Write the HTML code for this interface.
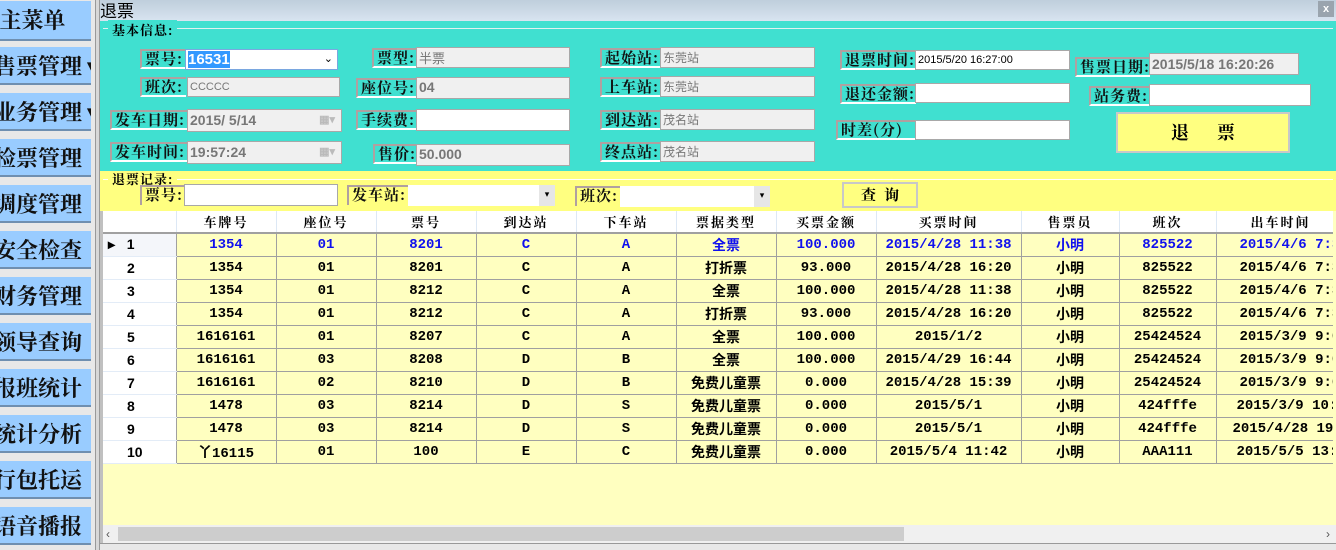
<!DOCTYPE html>
<html><head><meta charset="utf-8"><style>
*{box-sizing:border-box;margin:0;padding:0}
body{width:1336px;height:550px;overflow:hidden;background:#f0f0f0;position:relative;font-family:"Liberation Sans","Noto Serif CJK SC",serif}
.a{position:absolute}
.nav{position:absolute;left:0;width:91px;height:38px;background:#99ccff;border-bottom:2px solid #6f8fb0;font:bold 22px "Noto Serif CJK SC",serif;color:#111;white-space:nowrap;overflow:hidden;line-height:38px;text-indent:-6px}
.lbl{position:absolute;font:bold 15px "Noto Serif CJK SC",serif;color:#111;border-top:2px solid #b0a0a0;border-left:2px solid #b0a0a0;border-bottom:2px solid #fff;line-height:16px;padding-left:3px;white-space:nowrap;height:20px;letter-spacing:1px}
.inp{position:absolute;background:#fff;border:1px solid #a8a8a8;font:13px "Liberation Sans",sans-serif;padding-left:2px;line-height:19px;color:#000;white-space:nowrap}
.dis{background:#f0f0f0;color:#777}
table{border-collapse:collapse;table-layout:fixed;font:bold 14px "Liberation Mono","Noto Sans CJK SC",monospace}
td{height:23px;border:1px solid #a0a0a0;text-align:center;background:#ffffc0;white-space:nowrap;overflow:hidden;padding:0}
th{height:22px;background:#fff;border-right:1px solid #dde8f5;border-bottom:2px solid #a0a0a0;font:bold 13px "Noto Serif CJK SC",serif;white-space:nowrap;letter-spacing:2px}
td.rh{background:#fff;border:none;border-bottom:1px solid #e3ecf7;text-align:left;padding-left:24px;font-family:"Liberation Sans",sans-serif}
tr.b td{color:#1010ee}
tr.b td.rh{color:#000}
td.l{text-align:left;padding-left:23px}
</style></head><body>
<div class="a" style="left:0;top:0;width:96px;height:550px;background:#e8e8e8"></div>
<div class="nav" style="top:1px;height:40px">&nbsp;主菜单</div>
<div class="nav" style="top:47px">售票管理 ▾</div>
<div class="nav" style="top:93px">业务管理 ▾</div>
<div class="nav" style="top:139px">检票管理</div>
<div class="nav" style="top:185px">调度管理</div>
<div class="nav" style="top:231px">安全检查</div>
<div class="nav" style="top:277px">财务管理</div>
<div class="nav" style="top:323px">领导查询</div>
<div class="nav" style="top:369px">报班统计</div>
<div class="nav" style="top:415px">统计分析</div>
<div class="nav" style="top:461px">行包托运</div>
<div class="nav" style="top:507px">语音播报</div>
<div class="a" style="left:95px;top:0;width:5px;height:550px;background:#d8d8d8;border-left:1px solid #999;border-right:1px solid #999"></div>
<div class="a" style="left:100px;top:0;width:1236px;height:21px;background:linear-gradient(#bfcedc,#d8e4f0);font:17px 'Noto Sans CJK SC',sans-serif;line-height:20px">退票</div>
<div class="a" style="left:1318px;top:1px;width:16px;height:16px;background:#9aa4ae;color:#fff;font:bold 11px sans-serif;text-align:center;line-height:16px">x</div>
<div class="a" style="left:100px;top:21px;width:1236px;height:150px;background:#40e0d0"></div>
<div class="a" style="left:103px;top:28px;width:1230px;height:1px;background:#e0f0f0"></div>
<div class="a" style="left:108px;top:20px;background:#40e0d0;font:bold 13px 'Noto Serif CJK SC',serif;padding:0 4px;letter-spacing:1px">基本信息:</div>

<div class="lbl" style="left:140px;top:49px;width:46px">票号:</div>
<div class="inp" style="left:185px;top:49px;width:153px;height:21px;border:1px solid #7aa7e0"><span style="background:#3399ff;color:#fff;font-weight:bold;font-size:15px">16531</span><span class="a" style="right:4px;top:0;font-size:11px">⌄</span></div>
<div class="lbl" style="left:140px;top:77px;width:46px">班次:</div>
<div class="inp dis" style="left:187px;top:77px;width:153px;height:20px;font-size:11px">CCCCC</div>
<div class="lbl" style="left:110px;top:110px;width:77px">发车日期:</div>
<div class="inp dis" style="left:187px;top:109px;width:155px;height:23px;font-size:14px;font-weight:bold;line-height:21px">2015/ 5/14<span class="a" style="right:6px;top:0;color:#bbb;font-size:11px">▦▾</span></div>
<div class="lbl" style="left:110px;top:142px;width:77px">发车时间:</div>
<div class="inp dis" style="left:187px;top:141px;width:155px;height:23px;font-size:14px;font-weight:bold;line-height:21px">19:57:24<span class="a" style="right:6px;top:0;color:#bbb;font-size:11px">▦▾</span></div>

<div class="lbl" style="left:372px;top:48px;width:45px">票型:</div>
<div class="inp dis" style="left:416px;top:47px;width:154px;height:21px;font-family:'Noto Sans CJK SC',sans-serif">半票</div>
<div class="lbl" style="left:356px;top:78px;width:61px">座位号:</div>
<div class="inp dis" style="left:416px;top:77px;width:154px;height:22px;font-weight:bold;font-size:14px">04</div>
<div class="lbl" style="left:356px;top:110px;width:61px">手续费:</div>
<div class="inp" style="left:416px;top:109px;width:154px;height:22px"></div>
<div class="lbl" style="left:373px;top:144px;width:44px">售价:</div>
<div class="inp dis" style="left:416px;top:144px;width:154px;height:22px;font-weight:bold;font-size:14px">50.000</div>

<div class="lbl" style="left:600px;top:48px;width:61px">起始站:</div>
<div class="inp dis" style="left:660px;top:47px;width:155px;height:21px;font-family:'Noto Sans CJK SC',sans-serif;font-size:12px">东莞站</div>
<div class="lbl" style="left:600px;top:77px;width:61px">上车站:</div>
<div class="inp dis" style="left:660px;top:76px;width:155px;height:21px;font-family:'Noto Sans CJK SC',sans-serif;font-size:12px">东莞站</div>
<div class="lbl" style="left:600px;top:110px;width:61px">到达站:</div>
<div class="inp dis" style="left:660px;top:109px;width:155px;height:21px;font-family:'Noto Sans CJK SC',sans-serif;font-size:12px">茂名站</div>
<div class="lbl" style="left:600px;top:142px;width:61px">终点站:</div>
<div class="inp dis" style="left:660px;top:141px;width:155px;height:21px;font-family:'Noto Sans CJK SC',sans-serif;font-size:12px">茂名站</div>

<div class="lbl" style="left:840px;top:50px;width:76px">退票时间:</div>
<div class="inp" style="left:915px;top:50px;width:155px;height:20px;font-size:11px">2015/5/20 16:27:00</div>
<div class="lbl" style="left:840px;top:84px;width:76px">退还金额:</div>
<div class="inp" style="left:915px;top:83px;width:155px;height:20px"></div>
<div class="lbl" style="left:836px;top:120px;width:80px">时差(分)</div>
<div class="inp" style="left:915px;top:120px;width:155px;height:20px"></div>

<div class="lbl" style="left:1075px;top:57px;width:75px">售票日期:</div>
<div class="inp dis" style="left:1149px;top:53px;width:150px;height:22px;font-weight:bold;font-size:14px;line-height:20px">2015/5/18 16:20:26</div>
<div class="lbl" style="left:1089px;top:86px;width:61px">站务费:</div>
<div class="inp" style="left:1149px;top:84px;width:162px;height:22px"></div>
<div class="a" style="left:1116px;top:112px;width:174px;height:41px;background:#ffff80;border:2px solid #c8c8c8;font:bold 18px 'Noto Serif CJK SC',serif;text-align:center;line-height:37px;letter-spacing:28px;text-indent:28px">退票</div>

<div class="a" style="left:100px;top:171px;width:1236px;height:40px;background:#ffff80"></div>
<div class="a" style="left:103px;top:179px;width:1230px;height:1px;background:#fff"></div>
<div class="a" style="left:108px;top:171px;background:#ffff80;font:bold 13px 'Noto Serif CJK SC',serif;padding:0 4px;line-height:15px;letter-spacing:1px">退票记录:</div>
<div class="lbl" style="left:140px;top:185px;width:45px;border-bottom:none">票号:</div>
<div class="inp" style="left:184px;top:184px;width:154px;height:22px"></div>
<div class="lbl" style="left:347px;top:185px;width:62px;border-bottom:none">发车站:</div>
<div class="inp" style="left:408px;top:185px;width:147px;height:21px;border:none"><span class="a" style="right:0;top:0;width:16px;height:21px;background:#e6e6e6;font-size:9px;text-align:center">▾</span></div>
<div class="lbl" style="left:575px;top:186px;width:46px;border-bottom:none">班次:</div>
<div class="inp" style="left:620px;top:186px;width:150px;height:21px;border:none"><span class="a" style="right:0;top:0;width:16px;height:21px;background:#e6e6e6;font-size:9px;text-align:center">▾</span></div>
<div class="a" style="left:842px;top:182px;width:76px;height:26px;background:#ffff80;border:2px solid #c8c8c8;font:bold 15px 'Noto Serif CJK SC',serif;text-align:center;line-height:22px;letter-spacing:8px;text-indent:8px">查询</div>

<div class="a" style="left:100px;top:211px;width:1236px;height:339px;background:#ffffc0;border-left:3px solid #c0c0c0"></div>
<div class="a" style="left:103px;top:211px;width:1230px;height:314px;overflow:hidden">
<table style="width:1240px">
<colgroup><col style="width:73px"><col style="width:100px"><col style="width:100px"><col style="width:100px"><col style="width:100px"><col style="width:100px"><col style="width:100px"><col style="width:100px"><col style="width:145px"><col style="width:98px"><col style="width:97px"><col style="width:127px"></colgroup>
<tr><th></th><th>车牌号</th><th>座位号</th><th>票号</th><th>到达站</th><th>下车站</th><th>票据类型</th><th>买票金额</th><th>买票时间</th><th>售票员</th><th>班次</th><th style="text-align:left;padding-left:34px">出车时间</th></tr>
<tr class="b"><td class="rh" style="padding-left:5px;background:#f4f6fa">▸ &nbsp;&nbsp;1</td><td>1354</td><td>01</td><td>8201</td><td>C</td><td>A</td><td>全票</td><td>100.000</td><td>2015/4/28 11:38</td><td>小明</td><td>825522</td><td class="l">2015/4/6 7:30</td></tr>
<tr><td class="rh">2</td><td>1354</td><td>01</td><td>8201</td><td>C</td><td>A</td><td>打折票</td><td>93.000</td><td>2015/4/28 16:20</td><td>小明</td><td>825522</td><td class="l">2015/4/6 7:30</td></tr>
<tr><td class="rh">3</td><td>1354</td><td>01</td><td>8212</td><td>C</td><td>A</td><td>全票</td><td>100.000</td><td>2015/4/28 11:38</td><td>小明</td><td>825522</td><td class="l">2015/4/6 7:30</td></tr>
<tr><td class="rh">4</td><td>1354</td><td>01</td><td>8212</td><td>C</td><td>A</td><td>打折票</td><td>93.000</td><td>2015/4/28 16:20</td><td>小明</td><td>825522</td><td class="l">2015/4/6 7:30</td></tr>
<tr><td class="rh">5</td><td>1616161</td><td>01</td><td>8207</td><td>C</td><td>A</td><td>全票</td><td>100.000</td><td>2015/1/2</td><td>小明</td><td>25424524</td><td class="l">2015/3/9 9:00</td></tr>
<tr><td class="rh">6</td><td>1616161</td><td>03</td><td>8208</td><td>D</td><td>B</td><td>全票</td><td>100.000</td><td>2015/4/29 16:44</td><td>小明</td><td>25424524</td><td class="l">2015/3/9 9:00</td></tr>
<tr><td class="rh">7</td><td>1616161</td><td>02</td><td>8210</td><td>D</td><td>B</td><td>免费儿童票</td><td>0.000</td><td>2015/4/28 15:39</td><td>小明</td><td>25424524</td><td class="l">2015/3/9 9:00</td></tr>
<tr><td class="rh">8</td><td>1478</td><td>03</td><td>8214</td><td>D</td><td>S</td><td>免费儿童票</td><td>0.000</td><td>2015/5/1</td><td>小明</td><td>424fffe</td><td class="l" style="padding-left:20px">2015/3/9 10:00</td></tr>
<tr><td class="rh">9</td><td>1478</td><td>03</td><td>8214</td><td>D</td><td>S</td><td>免费儿童票</td><td>0.000</td><td>2015/5/1</td><td>小明</td><td>424fffe</td><td class="l" style="padding-left:16px">2015/4/28 19:00</td></tr>
<tr><td class="rh">10</td><td>丫16115</td><td>01</td><td>100</td><td>E</td><td>C</td><td>免费儿童票</td><td>0.000</td><td>2015/5/4 11:42</td><td>小明</td><td>AAA111</td><td class="l" style="padding-left:20px">2015/5/5 13:50</td></tr>
</table></div>
<div class="a" style="left:103px;top:525px;width:1233px;height:18px;background:#f0f0f0;font:12px sans-serif;line-height:18px;color:#555;padding-left:3px">‹<span class="a" style="left:15px;top:2px;width:786px;height:14px;background:#cdcdcd"></span><span class="a" style="right:6px;top:0">›</span></div>
<div class="a" style="left:100px;top:543px;width:1236px;height:7px;background:#e8e8e8;border-top:1px solid #999"></div>
</body></html>
